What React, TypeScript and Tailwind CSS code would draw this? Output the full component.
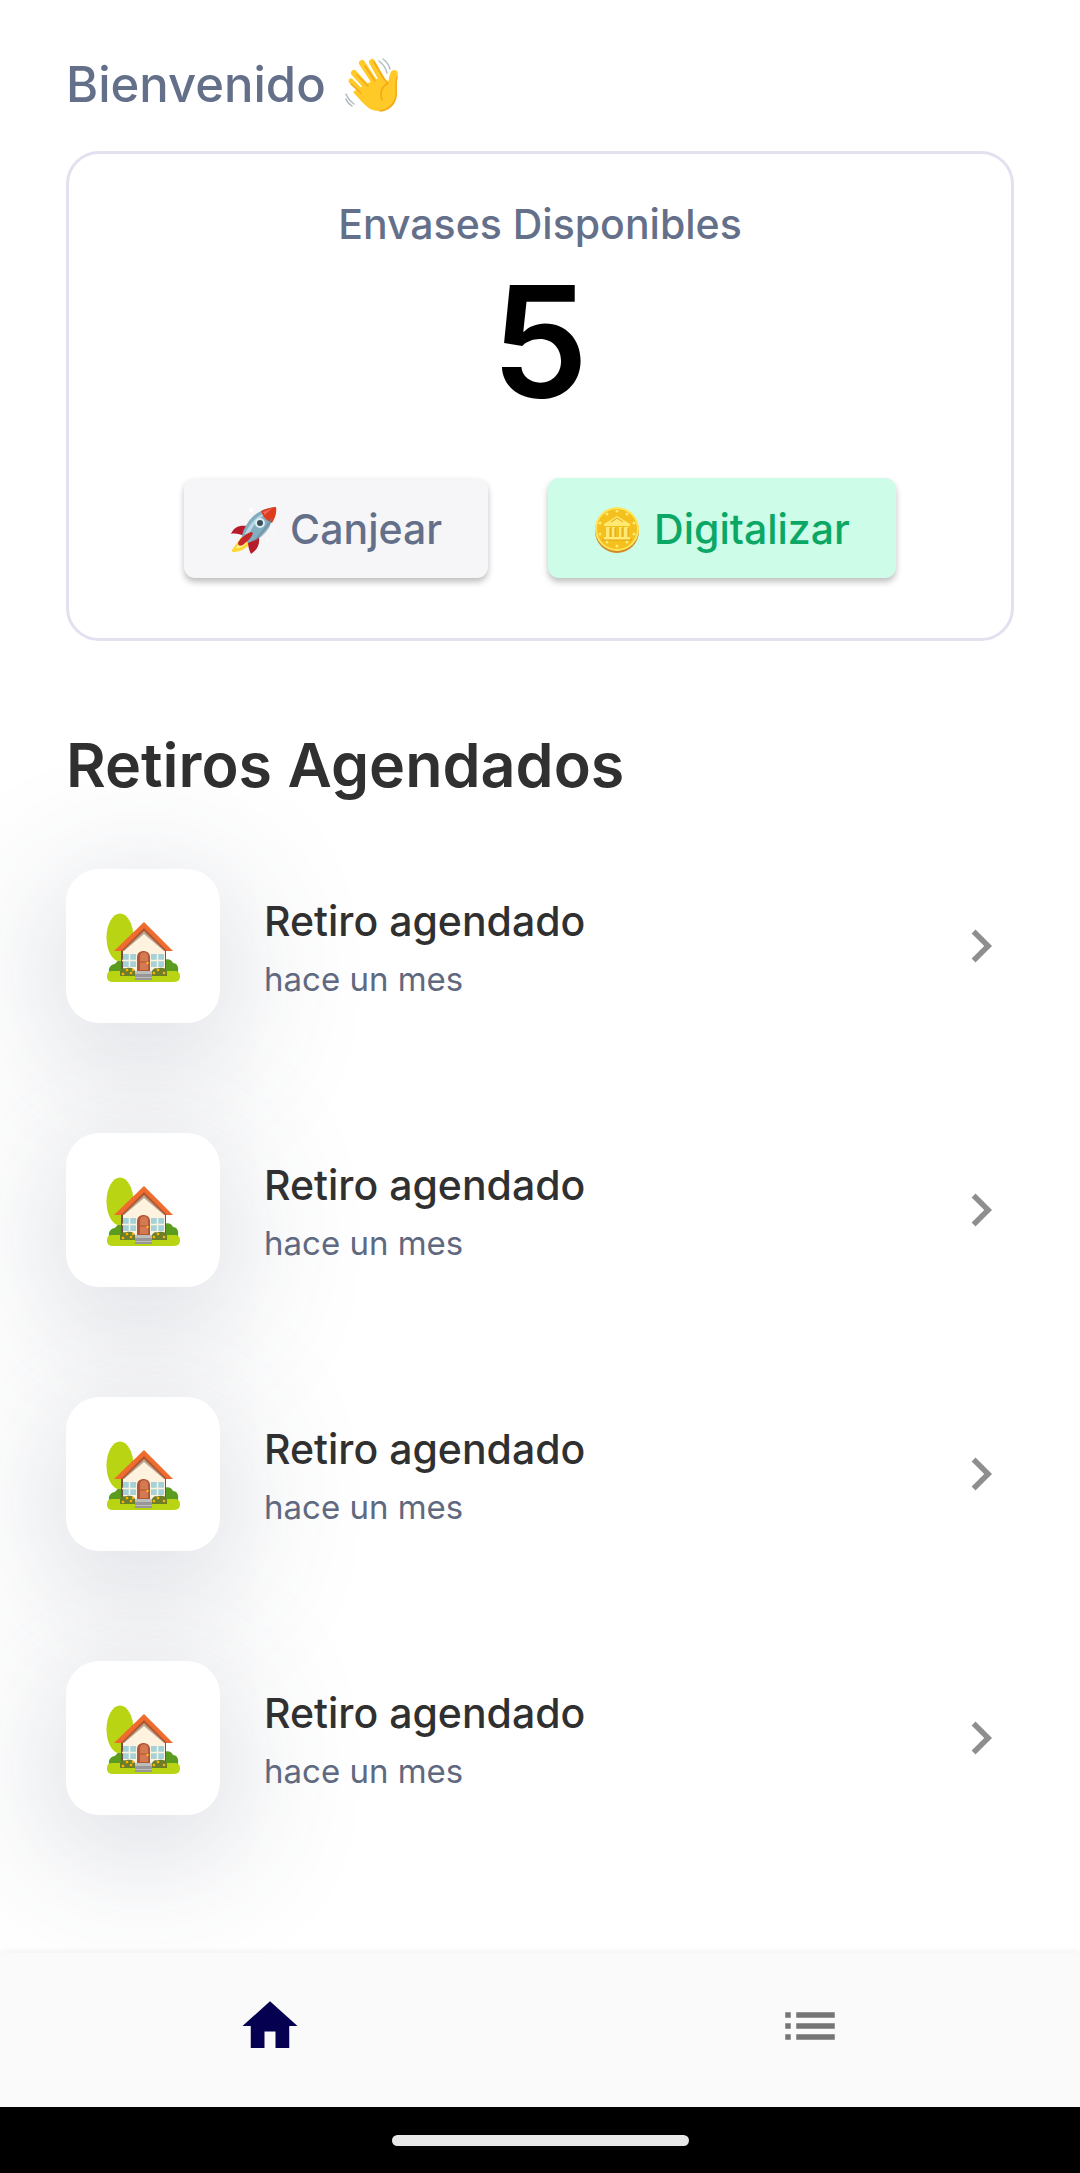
import React from 'react';
import { MdChevronRight, MdHome, MdList } from 'react-icons/md';

interface Pickup {
  id: number;
  title: string;
  when: string;
}

const pickups: Pickup[] = [
  { id: 1, title: 'Retiro agendado', when: 'hace un mes' },
  { id: 2, title: 'Retiro agendado', when: 'hace un mes' },
  { id: 3, title: 'Retiro agendado', when: 'hace un mes' },
  { id: 4, title: 'Retiro agendado', when: 'hace un mes' },
];

const WaveIcon: React.FC = () => (
  <svg className="w-[56px] h-[56px] shrink-0" viewBox="0 0 56 56" fill="none" aria-hidden="true">
    <g stroke="#B0BEC5" strokeWidth="1.5" strokeLinecap="round">
      <path d="M35 4c4 3 7 7 8 12M39 2c4 3 6 6 7 10M2 37c2 5 4 7 8 10M2 42c1 3 3 5 6 7" />
    </g>
    <g stroke="#FFCA28" strokeLinecap="round">
      <path d="M7 24l17 17" strokeWidth="5" />
      <path d="M10 16l19 21" strokeWidth="6" />
      <path d="M18 6l17 26" strokeWidth="6" />
      <path d="M28 5l14 25" strokeWidth="6" />
    </g>
    <path d="M22 27l17-8 5 6c2-5 1-11 6-12 5 0 4 5 3 9-1 6 0 12-1 18-1 9-9 14-17 14-8 0-12-4-17-9L9 35z" fill="#FFCA28" />
    <path d="M7 27l10 9M13 18l11 11M21 9l10 15M30 5l10 17 4 4c-5 3-9 8-6 17M53 20c-2 7 0 13-1 20-2 8-8 13-16 14" stroke="#F5A817" strokeWidth="1.5" strokeLinecap="round" strokeLinejoin="round" />
  </svg>
);

const RocketIcon: React.FC = () => (
  <svg className="w-[48px] h-[48px] shrink-0" viewBox="0 0 48 48" aria-hidden="true">
    <path d="M12 30L2 44c-1 2 1 2 3 2 7-1 12-4 15-9z" fill="#FDD835" />
    <path d="M12 33L6 42c5 0 8-2 11-6z" fill="#FFF59D" />
    <path d="M17 20C9 19 4 21 1 28c4-1 9 0 13 2zM29 31c1 8-2 13-8 17-2-4-3-8-3-12z" fill="#B71C2B" />
    <path d="M46 1C33 2 23 8 17 18c-3 5-5 9-5 13l6 6c6-2 11-5 15-10 8-8 12-17 13-26z" fill="#82AEC0" />
    <path d="M41 4C29 8 20 16 15 28l3 3C22 19 30 11 41 4z" fill="#B7D8E2" />
    <path d="M46 1c-5 0-10 2-15 4 2 6 5 9 11 12 3-5 5-10 4-16z" fill="#DD3D1B" />
    <path d="M43 2l-10 4 2 3c2-3 5-5 8-7z" fill="#F36A60" />
    <path d="M32 25l10-14-2 9c-4 7-9 12-17 16z" fill="#5F8A9D" opacity=".6" />
    <circle cx="30" cy="17" r="5" fill="#E0EEF0" />
    <circle cx="30" cy="17" r="3" fill="#38505E" />
    <path d="M21 26c-5 2-11 6-13 11 0 4 4 3 6 1 4-3 8-7 9-11z" fill="#C62828" />
    <g fill="#fff"><circle cx="21" cy="4" r="2" /><circle cx="7" cy="14" r="1" /><circle cx="42" cy="24" r="1" /><circle cx="37" cy="34" r="1" /></g>
  </svg>
);

const CoinIcon: React.FC = () => (
  <svg className="w-[46px] h-[48px] shrink-0" viewBox="0 0 46 48" aria-hidden="true">
    <circle cx="23" cy="25" r="22" fill="#D18A21" />
    <circle cx="23" cy="23" r="22" fill="#FFE55C" />
    <circle cx="23" cy="23" r="20" fill="#F4C01E" />
    <g fill="#FFE970">
      <path d="M10 18l13-8 13 8v2H10zM12 21h4v11h-4zM18 21h3v11h-3zM25 21h3v11h-3zM30 21h4v11h-4zM10 31h26v3H10z" />
      <circle cx="23" cy="5" r="1.5" /><circle cx="13" cy="8" r="1.5" /><circle cx="33" cy="8" r="1.5" />
      <circle cx="6" cy="17" r="1.5" /><circle cx="40" cy="17" r="1.5" /><circle cx="6" cy="28" r="1.5" />
      <circle cx="40" cy="28" r="1.5" /><circle cx="13" cy="36" r="1.5" /><circle cx="33" cy="36" r="1.5" /><circle cx="23" cy="40" r="1.5" />
    </g>
    <path d="M17 16l6-4 6 4M16 22v9M21 22v9M28 22v9M34 22v9M8 34h30" stroke="#DFA214" strokeWidth="1" fill="none" />
  </svg>
);

const HouseIcon: React.FC = () => (
  <svg className="w-[74px] h-[70px]" viewBox="0 0 74 70" aria-hidden="true">
    <path d="M12 42h6l-1 18h-6z" fill="#795548" />
    <ellipse cx="14" cy="24.5" rx="13.5" ry="24" fill="#B9D413" />
    <path d="M3 59c-1-5 3-8 6-8 2-4 8-3 9 0v10H3zM58 47c4-2 8 0 9 3 4 0 6 4 5 9H58z" fill="#5A9C1D" />
    <path d="M6 58h62q6 0 6 5v1q0 5-7 5H7q-6 0-6-5v-1q0-5 5-5z" fill="#B9D413" />
    <path d="M15 37h45v23H15z" fill="#715248" />
    <path d="M38 16L17 37v22h42V37z" fill="#FFF3E0" />
    <path d="M38 15L12 38h6l20-17 20 17h7z" fill="#B9A58F" />
    <path d="M38 13L12 38h5l21-20 21 20h6z" fill="#AD5632" />
    <path d="M38 9L8 38h7l23-23 23 23h6z" fill="#EF6C2E" />
    <path d="M17 41h13v13H17zM45 41h13v13H45z" fill="#A5D2D9" />
    <path d="M23.5 40v14M51.5 40v14M16 47.5h14M45 47.5h14" stroke="#FFF3E0" strokeWidth="1.5" />
    <path d="M31 59V44c0-8 13-8 13 0v15z" fill="#AE5736" />
    <path d="M34 57V43c0-5 8-5 8 0v14z" fill="#D37953" />
    <path d="M34 49h8" stroke="#AE5736" />
    <circle cx="41.5" cy="50" r="1.2" fill="#FFC107" />
    <path d="M14 63v-5c2-4 5-2 7-3 3-1 7 0 8 3v5zM46 63v-5c2-4 5-2 7-3 3-1 7 0 8 3v5z" fill="#6D7E29" />
    <g fill="#FFB300"><circle cx="17" cy="61" r="1.3" /><circle cx="21" cy="57" r="1.3" /><circle cx="25" cy="60" r="1.3" /><circle cx="27" cy="57" r="1.3" /><circle cx="48" cy="60" r="1.3" /><circle cx="52" cy="57" r="1.3" /><circle cx="58" cy="60" r="1.3" /></g>
    <path d="M29 58h17v9H29z" fill="#BDBDBD" />
    <path d="M29 61h17v3H29zM29 65h17v2H29z" fill="#979797" />
  </svg>
);

const PickupRow: React.FC<{ pickup: Pickup }> = ({ pickup }) => (
  <li>
    <a href="#retiro" className="flex items-center">
      <div className="w-[154px] h-[154px] pt-1 shrink-0 rounded-[33px] bg-white flex items-center justify-center shadow-[0_28px_140px_rgba(60,70,100,0.25)]">
        <HouseIcon />
      </div>
      <div className="flex-1 pl-11 pt-[10px]">
        <h3 className="text-[41px] leading-[56px] font-medium text-[#303030]">{pickup.title}</h3>
        <p className="text-[33px] leading-[60px] text-[#5F6980]">{pickup.when}</p>
      </div>
      <MdChevronRight className="w-[66px] h-[66px] shrink-0 text-[#8E8E8E]" />
    </a>
  </li>
);

const App: React.FC = () => {
  return (
    <div className="min-h-screen flex flex-col bg-white font-['Inter',sans-serif] overflow-hidden">
      <main className="flex-1 px-[66px] pt-[54px] pb-[136px]">
        <h1 className="flex items-center gap-[18px] text-[49px] leading-[62px] font-medium text-[#64708A]">
          Bienvenido
          <WaveIcon />
        </h1>

        {/* Balance */}
        <section className="mt-[35px] rounded-[33px] border-[3px] border-[#E2E1EF] flex flex-col items-center pt-[42px] pb-[60px]">
          <h2 className="text-[41px] leading-[56px] font-medium text-[#64708A]">Envases Disponibles</h2>
          <p className="text-[154px] leading-[178px] font-semibold text-black">5</p>
          <div className="mt-[48px] flex gap-[60px]">
            <button className="h-[100px] px-[46px] pt-1 flex items-center gap-3 rounded-[11px] bg-[#F6F6F9] text-[41px] font-medium text-[#64708A] shadow-[0_4px_6px_rgba(0,0,0,0.25)]">
              <RocketIcon />
              Canjear
            </button>
            <button className="h-[100px] px-[46px] pt-1 flex items-center gap-[14px] rounded-[11px] bg-[#CDFCE8] text-[41px] font-medium text-[#0BA765] shadow-[0_4px_6px_rgba(0,0,0,0.25)]">
              <CoinIcon />
              Digitalizar
            </button>
          </div>
        </section>

        {/* Scheduled pickups */}
        <h2 className="mt-[87px] text-[61px] leading-[74px] font-semibold text-[#303030]">Retiros Agendados</h2>
        <ul className="mt-[67px] flex flex-col gap-[110px]">
          {pickups.map((pickup) => (
            <PickupRow key={pickup.id} pickup={pickup} />
          ))}
        </ul>
      </main>

      <nav className="relative h-[154px] flex bg-[#FAFAFA] shadow-[0_-2px_6px_rgba(0,0,0,0.05)]">
        <a href="#inicio" aria-label="Inicio" className="flex-1 pb-2 flex items-center justify-center text-[#050050]">
          <MdHome className="w-[66px] h-[66px]" />
        </a>
        <a href="#lista" aria-label="Lista" className="flex-1 pb-2 flex items-center justify-center text-[#757575]">
          <MdList className="w-[66px] h-[66px]" />
        </a>
      </nav>
      <div className="relative h-[66px] flex items-center justify-center bg-black">
        <div className="w-[297px] h-[11px] rounded-full bg-[#E8E8E8]" />
      </div>
    </div>
  );
};

export default App;
